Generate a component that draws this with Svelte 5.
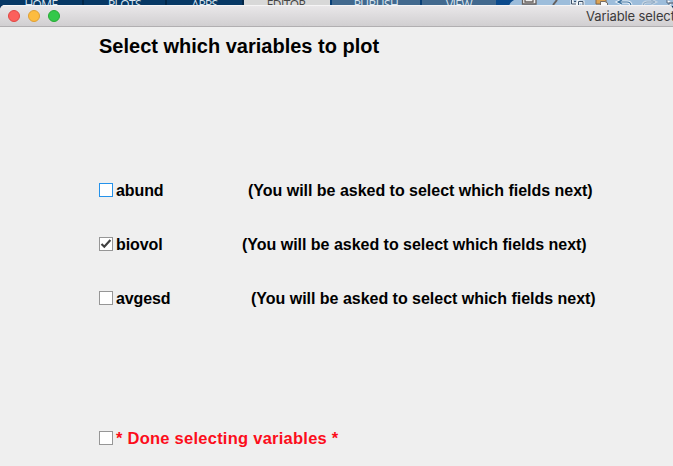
<script>
  const tabs = [
    { name: 'HOME', width: 84, kind: 'dark' },
    { name: 'PLOTS', width: 83, kind: 'dark' },
    { name: 'APPS', width: 77, kind: 'dark' },
    { name: 'EDITOR', width: 86, kind: 'active' },
    { name: 'PUBLISH', width: 90, kind: 'mid' },
    { name: 'VIEW', width: 76, kind: 'mid' }
  ];
  const note = '(You will be asked to select which fields next)';
  let fields = $state([
    { name: 'abund', checked: false, focus: true, start: 248 },
    { name: 'biovol', checked: true, focus: false, start: 242 },
    { name: 'avgesd', checked: false, focus: false, start: 251 }
  ]);
</script>

{#snippet box(checked, focus)}
  <span class="box" class:focus>
    {#if checked}
      <svg width="12" height="12" viewBox="0 0 12 12"><path d="M1.5 6 4.3 8.7 10.4 2" fill="none" stroke="#404040" stroke-width="2.2" /></svg>
    {/if}
  </span>
{/snippet}

<div class="screen">
  <div class="ribbon">
    {#each tabs as tab}
      <div class="tab {tab.kind}" style="width: {tab.width}px"><span>{tab.name}</span></div>
    {/each}
    <svg class="tools" width="177" height="6" viewBox="496 0 177 6">
      <path d="M496 0H673V6H496Z" fill="#0b4a8c" />
      <path d="M514 0H673V6H509Q510 2 514 0Z" fill="#9dbddb" />
      <path d="M522.5 0V4H536V0M525 0V2H533V0" fill="#eee" stroke="#665f5c" stroke-width="1.3" />
      <path d="M557 0L553 5" stroke="#655f5c" stroke-width="2" />
      <path d="M572 0V4H577M578 0V6M578 2H583V6" fill="none" stroke="#f4f6f8" stroke-width="3" />
      <path d="M571.5 0V4H576M578.5 6V1.5H583V6M574 1.5H576" fill="none" stroke="#3f536b" />
      <path d="M596 0V4H606V0" fill="#dca353" stroke="#8a6844" />
      <path d="M600.5 1.5H605L607.5 3V6H600.5Z" fill="#f8f8f8" stroke="#776c62" />
      <path d="M622 0L618 2L622 4M619 2H627Q631 2 631 6" fill="none" stroke="#eef4fa" stroke-width="3" />
      <path d="M622 0L618 2L622 4M619 2H627Q631 2 631 6" fill="none" stroke="#386f9c" stroke-width="1.2" />
      <path d="M651 0L655 2L651 4M654 2H647Q643 2 643 6" fill="none" stroke="#c5d4e2" stroke-width="3" />
      <path d="M651 0L655 2L651 4M654 2H647Q643 2 643 6" fill="none" stroke="#8eaac5" />
      <path d="M667 0V3H673M669 6V3H673" fill="#fff" stroke="#56697e" />
    </svg>
  </div>
  <main class="window">
    <header>
      <i class="red"></i><i class="yellow"></i><i class="green"></i>
      <span class="caption">Variable selection</span>
    </header>
    <h1>Select which variables to plot</h1>
    <div class="fields">
      {#each fields as field}
        <div class="row">
          {@render box(field.checked, field.focus)}
          <span class="name" style="width: {field.start - 116}px">{field.name}</span>
          <span class="note">{note}</span>
        </div>
      {/each}
    </div>
    <div class="row done">
      {@render box(false, false)}
      <span class="finish">* Done selecting variables *</span>
    </div>
  </main>
</div>

<style>
  :global(body) { overflow: hidden; }
  .screen { width: 673px; height: 466px; overflow: hidden; background: #06305c; font-family: "Liberation Sans", Arial, sans-serif; display: flex; flex-direction: column; }
  .ribbon { display: flex; height: 5px; flex: none; }
  .tab { box-sizing: border-box; height: 5px; overflow: hidden; flex: none; text-align: center; color: #dae5ef; font: 12px/9px "Open Sans", sans-serif; letter-spacing: -0.6px; border-right: 2px solid #032748; }
  .dark { background: #073865; }
  .active { background: #d8d8d8; color: #444; border-right-color: #d8d8d8; }
  .mid { background: #42698e; border-left: 2px solid #0a4076; border-right: 0; }
  .tools { flex: none; display: block; }
  .window { position: relative; height: 461px; background: #efefef; border-radius: 5px 5px 0 0; overflow: hidden; }
  header { box-sizing: border-box; height: 22px; display: flex; align-items: center; padding-left: 8px; background: linear-gradient(#e9e7e9, #d1cfd1); border-top: 1px solid #f6f5f6; border-bottom: 1px solid #b1afb1; }
  header i { box-sizing: border-box; width: 12px; height: 12px; border-radius: 50%; margin-right: 8px; border: 1px solid; flex: none; }
  .red { background: #fc605c; border-color: #df4744; }
  .yellow { background: #fdbc40; border-color: #de9f34; }
  .green { background: #34c84a; border-color: #27aa35; }
  .caption { margin-left: 518px; white-space: nowrap; font: 13px/20px Inter, sans-serif; letter-spacing: -0.1px; color: #3b3a3b; }
  h1 { margin: 7px 0 0 99px; height: 24px; font-size: 20px; line-height: 24px; font-weight: bold; color: #000; white-space: nowrap; }
  .fields { margin-top: 120px; display: flex; flex-direction: column; gap: 30px; }
  .row { display: flex; height: 24px; align-items: center; padding-left: 99px; font-size: 16px; font-weight: bold; line-height: 24px; white-space: nowrap; color: #000; }
  .box { box-sizing: border-box; width: 14px; height: 14px; border: 1px solid #969696; background: #fff; margin-right: 3px; flex: none; }
  .box.focus { border-color: #2492eb; }
  .box svg { display: block; }
  .name { flex: none; letter-spacing: -0.1px; padding-top: 1px; box-sizing: border-box; }
  .note { letter-spacing: -0.02px; padding-top: 1px; }
  .done { margin-top: 116px; color: #fc0d1b; }
  .finish { font-size: 16.5px; letter-spacing: 0.25px; padding-bottom: 1px; }
</style>
